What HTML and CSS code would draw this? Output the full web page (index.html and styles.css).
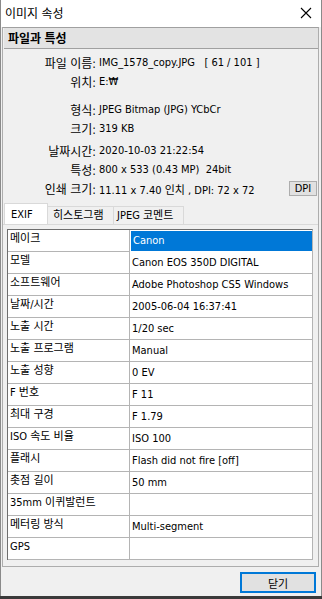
FILE: index.html
```html
<!DOCTYPE html>
<html lang="ko">
<head>
    <meta charset="UTF-8">
    <title>이미지 속성</title>
    <link rel="stylesheet" href="styles.css">
</head>
<body>
    <div class="window">
        <div class="titlebar">
            <span class="title">이미지 속성</span>
            <svg class="close" width="12" height="12" viewBox="0 0 12 12">
                <path d="M1 1 L11 11 M11 1 L1 11" stroke="#000" stroke-width="1.1" fill="none"/>
            </svg>
        </div>

        <div class="panel">
            <div class="group-title">파일과 특성</div>

            <div class="info">
                <div class="row"><span class="label">파일 이름:</span><span class="value">IMG_1578_copy.JPG &nbsp;&nbsp;[ 61 / 101 ]</span></div>
                <div class="row gap-after"><span class="label">위치:</span><span class="value">E:₩</span></div>
                <div class="row"><span class="label">형식:</span><span class="value">JPEG Bitmap (JPG) YCbCr</span></div>
                <div class="row small-gap-after"><span class="label">크기:</span><span class="value">319 KB</span></div>
                <div class="row"><span class="label">날짜시간:</span><span class="value">2020-10-03 21:22:54</span></div>
                <div class="row"><span class="label">특성:</span><span class="value">800 x 533 (0.43 MP) &nbsp;24bit</span></div>
                <div class="row"><span class="label">인쇄 크기:</span><span class="value">11.11 x 7.40 인치 , DPI: 72 x 72</span><button class="dpi">DPI</button></div>
            </div>

            <div class="tabs">
                <div class="tab active">EXIF</div>
                <div class="tab">히스토그램</div>
                <div class="tab">JPEG 코멘트</div>
            </div>

            <div class="tab-page">
                <div class="exif">
                    <div class="cell key">메이크</div><div class="cell selected">Canon</div>
                    <div class="cell key">모델</div><div class="cell">Canon EOS 350D DIGITAL</div>
                    <div class="cell key">소프트웨어</div><div class="cell">Adobe Photoshop CS5 Windows</div>
                    <div class="cell key">날짜/시간</div><div class="cell">2005-06-04 16:37:41</div>
                    <div class="cell key">노출 시간</div><div class="cell">1/20 sec</div>
                    <div class="cell key">노출 프로그램</div><div class="cell">Manual</div>
                    <div class="cell key">노출 성향</div><div class="cell">0 EV</div>
                    <div class="cell key">F 번호</div><div class="cell">F 11</div>
                    <div class="cell key">최대 구경</div><div class="cell">F 1.79</div>
                    <div class="cell key">ISO 속도 비율</div><div class="cell">ISO 100</div>
                    <div class="cell key">플래시</div><div class="cell">Flash did not fire [off]</div>
                    <div class="cell key">촛점 길이</div><div class="cell">50 mm</div>
                    <div class="cell key">35mm 이퀴발런트</div><div class="cell"></div>
                    <div class="cell key">메터링 방식</div><div class="cell">Multi-segment</div>
                    <div class="cell key">GPS</div><div class="cell"></div>
                </div>
            </div>
        </div>

        <div class="footer">
            <button class="close-btn">닫기</button>
        </div>
    </div>
</body>
</html>
```

FILE: styles.css
```css
body {
    margin: 0;
    padding: 0;
    background-color: #3a3a3a;
    font-family: Tahoma, "DejaVu Sans Condensed", "Noto Sans CJK KR", sans-serif;
    font-size: 11px;
    color: #000;
}

.window {
    width: 320px;
    height: 596px;
    background-color: #f0f0f0;
    border-left: 1px solid #8a8a8a;
    border-right: 1px solid #8a8a8a;
    display: flex;
    flex-direction: column;
}

.titlebar {
    height: 27px;
    background: #fff;
    display: flex;
    align-items: center;
    justify-content: space-between;
    padding: 0 9px 0 4px;
    flex-shrink: 0;
}

.title {
    font-family: "Noto Sans CJK KR", sans-serif;
    font-size: 12px;
    margin-top: -2px;
}

.close {
    margin-top: -1px;
}

.panel {
    margin: 0 2px 0 1px;
    height: 540px;
    flex-shrink: 0;
    border: 1px solid #adadad;
    border-top: 1px solid #a0a0a0;
    box-sizing: border-box;
    display: flex;
    flex-direction: column;
}

.group-title {
    height: 20px;
    line-height: 20px;
    background-color: #e3e3e3;
    border-bottom: 1px solid #a0a0a0;
    margin: 0 0 0 1px;
    padding-left: 4px;
    font-family: "Noto Sans CJK KR", sans-serif;
    font-weight: bold;
    font-size: 12px;
}

.info {
    padding-top: 4px;
}

.row {
    display: flex;
    align-items: center;
    height: 19px;
}

.row.gap-after {
    margin-bottom: 9px;
}

.row.small-gap-after {
    margin-bottom: 3px;
}

.label {
    width: 95px;
    text-align: right;
    padding-right: 2px;
    box-sizing: border-box;
    font-size: 12px;
}

.value {
    padding-left: 1px;
}

.dpi {
    margin-left: auto;
    margin-right: 1px;
    height: 15px;
    width: 28px;
    padding: 0;
    background-color: #e1e1e1;
    border: 1px solid #adadad;
    font-family: inherit;
    font-size: 11px;
    line-height: 12px;
}

.tabs {
    display: flex;
    margin: 8px 0 0 1px;
    height: 18px;
    align-items: flex-end;
}

.tab {
    height: 18px;
    line-height: 18px;
    padding: 0 5px;
    border: 1px solid #d9d9d9;
    border-bottom: none;
    border-left: none;
    background-color: #f0f0f0;
    box-sizing: border-box;
}

.tab.active {
    height: 21px;
    line-height: 22px;
    background: #fff;
    width: 44px;
    padding-left: 6px;
    border-left: 1px solid #d9d9d9;
}

.tab:nth-child(2) {
    width: 66px;
}

.tab:nth-child(3) {
    width: 70px;
    padding-left: 3px;
}

.tab-page {
    flex: 1;
    border-top: 1px solid #d9d9d9;
    padding: 4px 3px 0 4px;
}

.exif {
    width: 306px;
    display: grid;
    grid-template-columns: 122px 1fr;
    grid-auto-rows: 22px;
    border-top: 1px solid #6e6e6e;
    border-left: 1px solid #6e6e6e;
    border-right: 1px solid #b4b4b4;
    box-sizing: border-box;
    background: #fff;
}

.cell {
    border-right: 1px solid #b4b4b4;
    border-bottom: 1px solid #b4b4b4;
    padding: 0 2px;
    line-height: 21px;
    overflow: hidden;
    white-space: nowrap;
}

.cell:nth-child(2n) {
    border-right: none;
    padding-top: 1px;
    line-height: 20px;
}

.cell.key {
    line-height: 18px;
}

.cell.selected {
    background-color: #0078d7;
    color: #fff;
    margin: 1px 0 1px 1px;
    line-height: 18px;
    border: none;
}

.footer {
    flex: 1;
    display: flex;
    justify-content: flex-end;
    align-items: flex-start;
    padding: 5px 5px 0 0;
}

.close-btn {
    width: 76px;
    height: 21px;
    background-color: #e1e1e1;
    border: 2px solid #0078d7;
    font-family: "Noto Sans CJK KR", sans-serif;
    font-size: 11px;
    padding: 0;
}
```
